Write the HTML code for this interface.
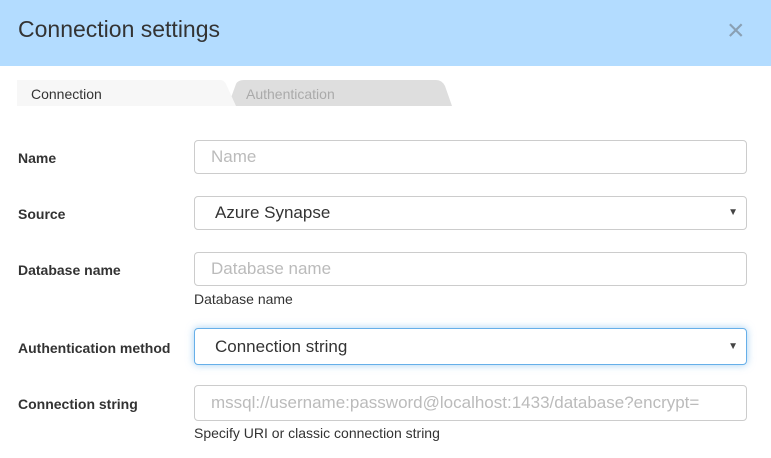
<!DOCTYPE html>
<html><head><style>
body{margin:0;width:771px;height:458px;background:#fff;font-family:"Liberation Sans",sans-serif;overflow:hidden;position:relative;color:#333}
.hdr{position:absolute;left:0;top:0;width:771px;height:66px;background:#b3dcff}
.hdr h1{margin:0;position:absolute;left:18px;top:16px;font-size:23px;font-weight:normal;color:#333}
.x{position:absolute;left:727px;top:14px;font-size:30px;color:#8aa0b4}
.lbl{position:absolute;left:18px;font-size:14px;font-weight:bold;color:#333}
.in{position:absolute;left:194px;width:553px;height:34px;border:1px solid #ccc;border-radius:4px;box-sizing:border-box;font-size:17px;line-height:32px;padding-left:16px;color:#bbb}
.in.sel{color:#333;padding-left:20px}
.arr{position:absolute;right:8px;top:0;font-size:10px;color:#444}
.help{position:absolute;left:194px;font-size:14px;color:#333}
</style></head><body>
<div class="hdr"><h1>Connection settings</h1><div class="x">×</div></div>
<svg style="position:absolute;left:0;top:78px" width="771" height="30">
<path d="M228 28 L236 6 Q238 2 244 2 L436 2 Q442 2 445 8 L452 28 Z" fill="#dedede"/>
<path d="M17 2 L220 2 Q224 2 226 6 L236 28 L17 28 Z" fill="#f7f7f7"/>
<text x="31" y="21" font-family="Liberation Sans" font-size="14" fill="#333">Connection</text>
<text x="246" y="21" font-family="Liberation Sans" font-size="14" fill="#aaa">Authentication</text>
</svg>
<div class="lbl" style="top:150px">Name</div>
<div class="in" style="top:140px">Name</div>
<div class="lbl" style="top:206px">Source</div>
<div class="in sel" style="top:196px">Azure Synapse<span class="arr">▼</span></div>
<div class="lbl" style="top:262px">Database name</div>
<div class="in" style="top:252px">Database name</div>
<div class="help" style="top:291px">Database name</div>
<div class="lbl" style="top:340px">Authentication method</div>
<div class="in sel" style="top:328px;height:37px;line-height:35px;border-color:#66afe9;box-shadow:0 0 8px rgba(102,175,233,.6)">Connection string<span class="arr">▼</span></div>
<div class="lbl" style="top:396px">Connection string</div>
<div class="in" style="top:385px;height:36px;line-height:34px;white-space:nowrap;overflow:hidden">mssql://username:password@localhost:1433/database?encrypt=</div>
<div class="help" style="top:425px">Specify URI or classic connection string</div>
</body></html>
